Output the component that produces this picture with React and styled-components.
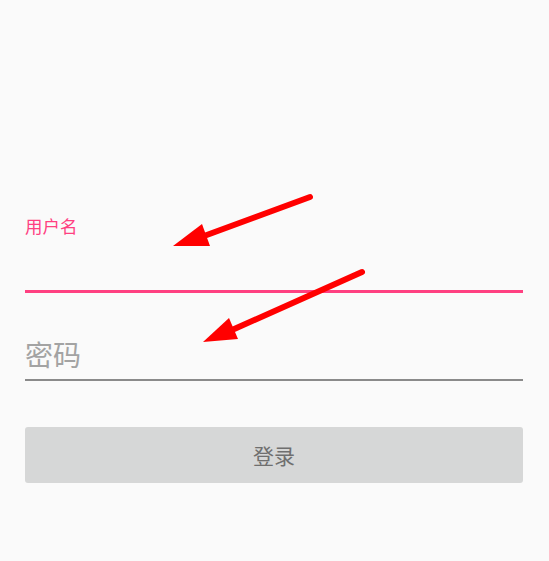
import styled, { createGlobalStyle } from "styled-components";

const GlobalStyle = createGlobalStyle`
    html, body {
        margin: 0;
        padding: 0;
        background-color: #fafafa;
        font-family: "Noto Sans CJK SC", "Noto Sans", sans-serif;
    }
`;

//전체
const Page = styled.div`
    position: relative;
    width: 549px;
    height: 561px;
    background-color: #fafafa;
    overflow: hidden;
`;

const Form = styled.form`
    display: flex;
    flex-direction: column;
    padding: 216px 26px 0 25px;
`;

//입력칸
const Field = styled.div`
    display: flex;
    flex-direction: column;
    margin-top: ${(p) => p.$gap || 0}px;
    border-bottom: ${(p) => (p.$active ? "3px solid #ff4081" : "2px solid #8a8a8a")};
`;

const Label = styled.label`
    font-size: 17.5px;
    line-height: 20px;
    color: #ff4081;
`;

const Input = styled.input`
    height: ${(p) => p.$h}px;
    padding: 0;
    border: none;
    outline: none;
    background: transparent;
    font-family: inherit;
    font-size: 28px;
    color: #333;

    &::placeholder {
        color: #a3a3a3;
    }
`;

const LoginButton = styled.button`
    height: 56px;
    margin-top: 46px;
    border: none;
    border-radius: 3px;
    background-color: #d6d7d7;
    color: #6f6f6f;
    font-family: inherit;
    font-size: 21px;
    letter-spacing: 0;
`;

//화살표 (스크린샷 위에 덧그린 것)
const Overlay = styled.svg`
    position: absolute;
    left: 0;
    top: 0;
    pointer-events: none;
`;

export default function App() {
    return (
        <Page>
            <GlobalStyle />
            <Form onSubmit={(e) => e.preventDefault()}>
                <Field $active>
                    <Label>用户名</Label>
                    <Input $h={54} />
                </Field>
                <Field $gap={35}>
                    <Input $h={51} type="password" placeholder="密码" />
                </Field>
                <LoginButton type="submit">登录</LoginButton>
            </Form>

            <Overlay width="549" height="561" viewBox="0 0 549 561">
                <line x1="310" y1="197" x2="204" y2="236" stroke="#ff0000" strokeWidth="6" strokeLinecap="round" />
                <polygon points="173,246 202,224 210,246" fill="#ff0000" />
                <line x1="362" y1="272" x2="232" y2="330" stroke="#ff0000" strokeWidth="6" strokeLinecap="round" />
                <polygon points="203,342 229,318 238,339" fill="#ff0000" />
            </Overlay>
        </Page>
    );
}
